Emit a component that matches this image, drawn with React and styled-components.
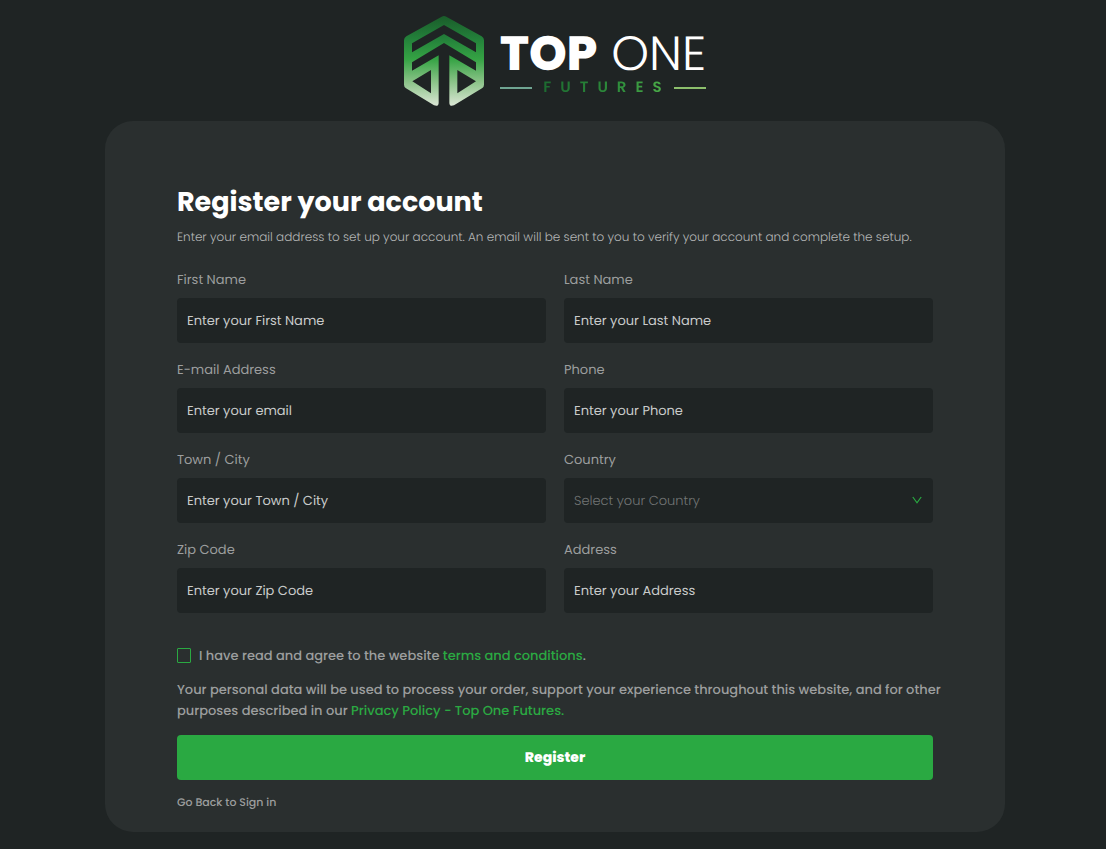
import React, { useState } from 'react';
import styled, { createGlobalStyle } from 'styled-components';

const fields = [
  { name: 'firstName', label: 'First Name', placeholder: 'Enter your First Name', type: 'text' },
  { name: 'lastName', label: 'Last Name', placeholder: 'Enter your Last Name', type: 'text' },
  { name: 'email', label: 'E-mail Address', placeholder: 'Enter your email', type: 'email' },
  { name: 'phone', label: 'Phone', placeholder: 'Enter your Phone', type: 'tel' },
  { name: 'city', label: 'Town / City', placeholder: 'Enter your Town / City', type: 'text' },
  { name: 'country', label: 'Country', placeholder: 'Select your Country', type: 'select' },
  { name: 'zip', label: 'Zip Code', placeholder: 'Enter your Zip Code', type: 'text' },
  { name: 'address', label: 'Address', placeholder: 'Enter your Address', type: 'text' },
];

const countries = ['Canada', 'France', 'Germany', 'Spain', 'United Kingdom', 'United States'];

function LogoMark() {
  return (
    <svg width="80" height="90" viewBox="27 24 240 270" aria-hidden="true">
      <defs>
        <linearGradient id="mark" x1="0" y1="0" x2="0" y2="1">
          <stop offset="0" stopColor="#1a5c2a" />
          <stop offset="0.25" stopColor="#23803a" />
          <stop offset="0.48" stopColor="#35a344" />
          <stop offset="0.72" stopColor="#86c184" />
          <stop offset="1" stopColor="#dbe6d5" />
        </linearGradient>
      </defs>
      <path
        fill="url(#mark)"
        fillRule="evenodd"
        d="M140 26 Q147 22 154 26 L260 85 Q267 89 267 97 V230 Q267 237 261 241 L177 292 Q163 297 163 284 V142 L243 188 V163 L147 105 L51 163 V188 L131 142 V284 Q131 297 117 292 L33 241 Q27 237 27 230 V97 Q27 89 34 85 Z
        M147 51 L51 106 V133 L147 78 L243 133 V106 Z
        M108 186 L52 220 L108 256 Z
        M187 186 L243 220 L187 256 Z"
      />
    </svg>
  );
}

export default function App() {
  const [values, setValues] = useState({});
  const [agreed, setAgreed] = useState(false);

  const handleChange = (event) => {
    setValues({ ...values, [event.target.name]: event.target.value });
  };

  return (
    <>
      <GlobalStyle />
      <Page>
        <Logo>
          <LogoMark />
          <Wordmark>
            <BrandName>
              <strong>TOP</strong>
              <span>ONE</span>
            </BrandName>
            <BrandSub>
              <Rule $color="#6fa592" />
              <SubText>FUTURES</SubText>
              <Rule $color="#8cbf6c" />
            </BrandSub>
          </Wordmark>
        </Logo>
        <Card onSubmit={(e) => e.preventDefault()}>
          <Title>Register your account</Title>
          <Subtitle>
            Enter your email address to set up your account. An email will be sent to you to verify your account and complete the setup.
          </Subtitle>
          <FieldGrid>
            {fields.map((field) => (
              <Field key={field.name}>
                <Label htmlFor={field.name}>{field.label}</Label>
                {field.type === 'select' ? (
                  <SelectWrap>
                    <Select id={field.name} name={field.name} value={values[field.name] || ''} onChange={handleChange}>
                      <option value="">{field.placeholder}</option>
                      {countries.map((country) => (
                        <option key={country}>{country}</option>
                      ))}
                    </Select>
                    <svg width="10" height="8" viewBox="0 0 10 8" aria-hidden="true">
                      <path d="M0.8 1 L5 6.8 L9.2 1" fill="none" stroke="#2aa942" strokeWidth="1.2" />
                    </svg>
                  </SelectWrap>
                ) : (
                  <Input
                    id={field.name}
                    name={field.name}
                    type={field.type}
                    placeholder={field.placeholder}
                    value={values[field.name] || ''}
                    onChange={handleChange}
                  />
                )}
              </Field>
            ))}
          </FieldGrid>
          <Terms>
            <Checkbox id="terms" checked={agreed} onChange={(e) => setAgreed(e.target.checked)} />
            <label htmlFor="terms">
              I have read and agree to the website <GreenLink href="#terms">terms and conditions</GreenLink>.
            </label>
          </Terms>
          <Privacy>
            Your personal data will be used to process your order, support your experience throughout this website, and for other
            purposes described in our <GreenLink href="#privacy">Privacy Policy - Top One Futures.</GreenLink>
          </Privacy>
          <Submit type="submit">Register</Submit>
          <BackLink href="#signin">Go Back to Sign in</BackLink>
        </Card>
      </Page>
    </>
  );
}

const GlobalStyle = createGlobalStyle`
  * {
    box-sizing: border-box;
  }
  body {
    margin: 0;
    background-color: #1f2424;
    font-family: Poppins, Inter, sans-serif;
    font-size: 13px;
    color: #9c9e9e;
    text-rendering: geometricPrecision;
  }
  input, select, button {
    font-family: inherit;
    font-size: inherit;
    text-rendering: inherit;
  }
`;

const Page = styled.main`
  display: flex;
  flex-direction: column;
  align-items: center;
  gap: 15px;
  padding: 16px 16px 17px 20px;
`;

const Logo = styled.div`
  display: flex;
  align-items: center;
  gap: 16px;
`;

const Wordmark = styled.div`
  padding-top: 6px;
  color: #ffffff;
`;

const BrandName = styled.div`
  display: flex;
  gap: 14px;
  font-size: 48px;
  line-height: 48px;
  strong {
    font-weight: 800;
  }
  span {
    font-weight: 300;
  }
`;

const BrandSub = styled.div`
  display: flex;
  align-items: center;
  justify-content: space-between;
  line-height: 20px;
`;

const Rule = styled.span`
  width: 32px;
  height: 2px;
  background-color: ${(props) => props.$color};
`;

const SubText = styled.span`
  margin-left: 8px;
  font-size: 15px;
  font-weight: 600;
  letter-spacing: 9px;
  background: linear-gradient(90deg, #1c6b30, #2f8f3c 60%, #4fb04a);
  background-clip: text;
  color: transparent;
`;

const Card = styled.form`
  width: 100%;
  max-width: 900px;
  padding: 61px 72px 22px;
  border-radius: 28px;
  background-color: #2a2f2f;
`;

const Title = styled.h1`
  margin: 0;
  font-size: 27px;
  line-height: 42px;
  font-weight: 700;
  color: #ffffff;
`;

const Subtitle = styled.p`
  margin: 4px 0 22px;
  font-size: 12px;
  line-height: 20px;
  font-weight: 300;
  color: #b4b6b6;
`;

const FieldGrid = styled.div`
  display: grid;
  grid-template-columns: 1fr 1fr;
  gap: 17px 18px;
`;

const Field = styled.div`
  display: flex;
  flex-direction: column;
  gap: 8px;
`;

const Label = styled.label`
  line-height: 20px;
`;

const Input = styled.input`
  width: 100%;
  height: 45px;
  padding: 0 10px;
  border: none;
  border-radius: 4px;
  background-color: #1f2424;
  color: #ffffff;
  &::placeholder {
    color: #c9cbcb;
    opacity: 1;
  }
`;

const SelectWrap = styled.div`
  position: relative;
  svg {
    position: absolute;
    top: 18px;
    right: 11px;
    pointer-events: none;
  }
`;

const Select = styled.select`
  display: block;
  appearance: none;
  width: 100%;
  height: 45px;
  padding: 0 30px 0 10px;
  border: none;
  border-radius: 4px;
  background-color: #1f2424;
  color: #727575;
  font-weight: 300;
`;

const Terms = styled.div`
  display: flex;
  align-items: center;
  gap: 8px;
  margin-top: 32px;
  line-height: 21px;
  font-weight: 500;
`;

const Checkbox = styled.input.attrs({ type: 'checkbox' })`
  appearance: none;
  width: 14px;
  height: 15px;
  margin: 0;
  border: 1px solid #2aa942;
  border-radius: 1px;
  &:checked {
    background-color: #2aa942;
  }
`;

const GreenLink = styled.a`
  color: #2aa942;
  text-decoration: none;
`;

const Privacy = styled.p`
  margin: 13px -12px 14px 0;
  line-height: 21px;
  font-weight: 500;
`;

const Submit = styled.button`
  display: block;
  width: 100%;
  height: 45px;
  border: none;
  border-radius: 4px;
  background-color: #2aa942;
  color: #ffffff;
  font-size: 14px;
  font-weight: 800;
  cursor: pointer;
`;

const BackLink = styled.a`
  display: block;
  width: fit-content;
  margin-top: 14px;
  font-size: 11px;
  line-height: 16px;
  font-weight: 500;
  color: #9c9e9e;
  text-decoration: none;
`;
